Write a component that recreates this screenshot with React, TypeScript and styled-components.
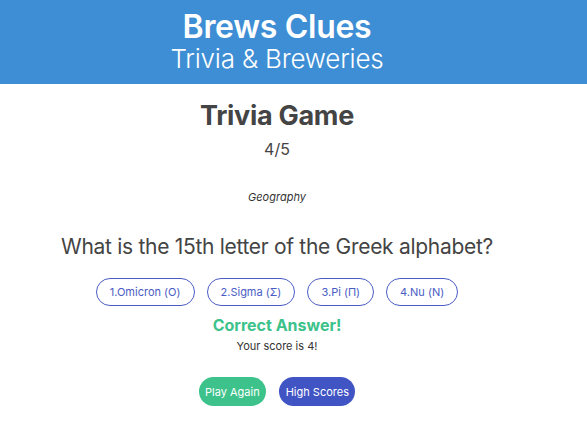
import React, { useState } from 'react';
import styled, { createGlobalStyle } from 'styled-components';

const GlobalStyle = createGlobalStyle`
  html, body {
    margin: 0;
    padding: 0;
    background: #ffffff;
    font-family: Inter, "Noto Sans", sans-serif;
  }
`;

const Header = styled.header`
  background-color: #3d8ed4;
  color: #ffffff;
  height: 84px;
  padding-right: 33px;
  display: flex;
  flex-direction: column;
  align-items: center;
  justify-content: center;
`;

const Title = styled.h1`
  margin: 0;
  font-size: 32px;
  font-weight: 600;
  line-height: 34px;
  letter-spacing: -0.3px;
`;

const Subtitle = styled.h2`
  margin: 0;
  font-size: 26px;
  font-weight: 300;
  line-height: 30px;
  letter-spacing: -0.2px;
`;

const Main = styled.main`
  padding-right: 33px;
  display: flex;
  flex-direction: column;
  align-items: center;
  color: #444;
`;

const GameTitle = styled.h3`
  margin: 15px 0 0;
  font-size: 27px;
  font-weight: 700;
  line-height: 34px;
  letter-spacing: -0.3px;
  color: #444;
`;

const Progress = styled.div`
  margin-top: 6px;
  font-size: 16px;
  line-height: 20px;
  color: #444;
`;

const Category = styled.div`
  margin-top: 31px;
  font-size: 11px;
  font-style: italic;
  line-height: 14px;
  color: #333;
`;

const Question = styled.p`
  margin: 29px 0 0;
  font-size: 21px;
  line-height: 28px;
  letter-spacing: -0.3px;
  color: #444;
`;

const Options = styled.div`
  margin-top: 17px;
  display: flex;
  gap: 12px;
`;

const OptionButton = styled.button`
  height: 28px;
  padding: 0 13px;
  border: 1px solid #4a5cc4;
  border-radius: 14px;
  background: #ffffff;
  color: #4a5cc4;
  font-family: Inter, "Noto Sans", sans-serif;
  font-size: 11px;
  cursor: pointer;
`;

const Result = styled.div`
  margin-top: 9px;
  font-size: 16px;
  font-weight: 700;
  line-height: 20px;
  color: #3cc28a;
`;

const Score = styled.div`
  margin-top: 4px;
  font-size: 11px;
  line-height: 14px;
  color: #333;
`;

const Actions = styled.div`
  margin-top: 24px;
  display: flex;
  gap: 13px;
`;

const ActionButton = styled.button<{ $color: string }>`
  height: 29px;
  padding: 0 6.5px;
  border: none;
  border-radius: 15px;
  background-color: ${({ $color }) => $color};
  color: #ffffff;
  font-family: Inter, "Noto Sans", sans-serif;
  font-size: 11px;
  cursor: pointer;
`;

const answers = ['Omicron (Ο)', 'Sigma (Σ)', 'Pi (Π)', 'Nu (Ν)'];

const App: React.FC = () => {
  const [score] = useState(4);

  return (
    <>
      <GlobalStyle />
      <Header>
        <Title>Brews Clues</Title>
        <Subtitle>Trivia &amp; Breweries</Subtitle>
      </Header>
      <Main>
        <GameTitle>Trivia Game</GameTitle>
        <Progress>4/5</Progress>
        <Category>Geography</Category>
        <Question>What is the 15th letter of the Greek alphabet?</Question>
        <Options>
          {answers.map((a, i) => (
            <OptionButton key={a}>{i + 1}.{a}</OptionButton>
          ))}
        </Options>
        <Result>Correct Answer!</Result>
        <Score>Your score is {score}!</Score>
        <Actions>
          <ActionButton $color="#3cc28a">Play Again</ActionButton>
          <ActionButton $color="#4054c4">High Scores</ActionButton>
        </Actions>
      </Main>
    </>
  );
};

export default App;
